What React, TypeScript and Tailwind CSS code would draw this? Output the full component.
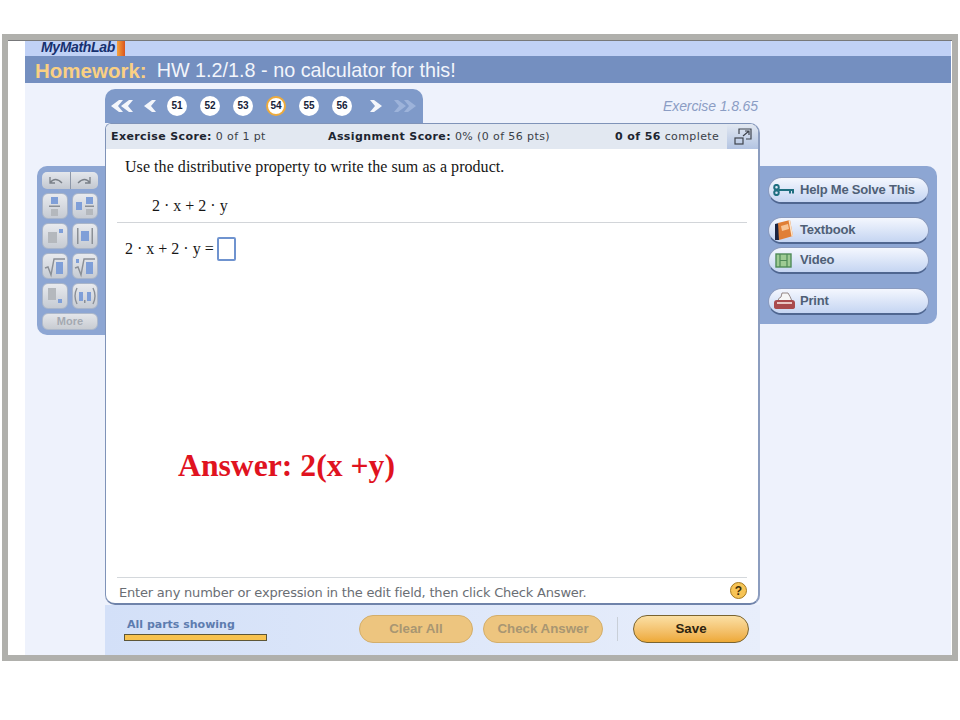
import React from 'react';

const pages = ['51', '52', '53', '54', '55', '56'];

function Chevron({ double, left, color }: { double?: boolean; left?: boolean; color: string }) {
  return (
    <svg width={double ? 24 : 14} height="14" viewBox={double ? '0 0 24 14' : '0 0 14 14'} className="shrink-0">
      <g fill={color} transform={left ? (double ? 'translate(24 0) scale(-1 1)' : 'translate(14 0) scale(-1 1)') : undefined}>
        <path d="M1 1 L5 1 L13 7 L5 13 L1 13 L6 7 Z" />
        {double && <path d="M11 1 L15 1 L23 7 L15 13 L11 13 L16 7 Z" />}
      </g>
    </svg>
  );
}

function ToolIcon({ kind }: { kind: number }) {
  const b = '#7f9fd8';
  const g = '#b4b8bd';
  const d = '#8a8f96';
  return (
    <svg width="24" height="24" viewBox="0 0 24 24">
      {kind === 0 && (
        <g>
          <rect x="8" y="3" width="7" height="7" fill={b} />
          <rect x="6" y="11.5" width="11" height="1.5" fill={d} />
          <rect x="8" y="15" width="7" height="7" fill={g} />
        </g>
      )}
      {kind === 1 && (
        <g>
          <rect x="3" y="8" width="6" height="8" fill={b} />
          <rect x="13" y="3" width="7" height="7" fill={b} />
          <rect x="12" y="11.5" width="9" height="1.5" fill={d} />
          <rect x="13" y="15" width="7" height="6" fill={g} />
        </g>
      )}
      {kind === 2 && (
        <g>
          <rect x="5" y="8" width="9" height="11" fill={g} />
          <rect x="16" y="5" width="4" height="4" fill={b} />
        </g>
      )}
      {kind === 3 && (
        <g>
          <rect x="4" y="4" width="1.5" height="16" fill={d} />
          <rect x="8" y="7" width="8" height="10" fill={b} />
          <rect x="18.5" y="4" width="1.5" height="16" fill={d} />
        </g>
      )}
      {kind === 4 && (
        <g>
          <path d="M2 14 L5 13 L8 21 L11 5 L22 5" fill="none" stroke={d} strokeWidth="1.4" />
          <rect x="13" y="8" width="7" height="12" fill={b} />
        </g>
      )}
      {kind === 5 && (
        <g>
          <rect x="3" y="5" width="3" height="4" fill={b} />
          <path d="M2 14 L5 13 L8 21 L11 5 L22 5" fill="none" stroke={d} strokeWidth="1.4" />
          <rect x="13" y="8" width="7" height="12" fill={b} />
        </g>
      )}
      {kind === 6 && (
        <g>
          <rect x="5" y="4" width="8" height="12" fill={g} />
          <rect x="15" y="15" width="4" height="4" fill={b} />
        </g>
      )}
      {kind === 7 && (
        <g>
          <path d="M4 4 Q0 12 4 20 M20 4 Q24 12 20 20" fill="none" stroke={d} strokeWidth="1.4" />
          <rect x="6" y="8" width="4" height="9" fill={b} />
          <rect x="11" y="16" width="1.5" height="3" fill={d} />
          <rect x="14" y="8" width="4" height="9" fill={b} />
        </g>
      )}
    </svg>
  );
}

function SideButton({ label, icon, className }: { label: string; icon: React.ReactNode; className?: string }) {
  return (
    <div className={`w-[161px] h-[27px] rounded-[14px] border border-[#8b9cc0] border-b-2 border-b-[#4f6690] bg-gradient-to-b from-[#f4f7fe] to-[#c5d5f2] flex items-center ${className ?? ''}`}>
      <span className="w-[31px] pl-[4px] flex items-center shrink-0">{icon}</span>
      <span className="text-[13px] leading-none pb-[2px] font-bold text-[#4f5f76] font-['Liberation_Sans',sans-serif] tracking-[-0.2px]">{label}</span>
    </div>
  );
}

export default function App() {
  return (
    <div className="w-[960px] h-[720px] bg-white pt-[34px] overflow-hidden font-['Liberation_Sans',sans-serif]">
      <div className="h-[627px] ml-[2px] mr-[2px] bg-white border-[6px] border-[#b0b0ac] flex flex-col">
        <div className="flex-1 flex flex-col pl-[17px] pr-[1px] border-t border-t-[#77787a]">
          {/* header bands */}
          <div className="h-[15px] bg-[#c0d1f6] relative flex items-center shrink-0">
            <span className="ml-[16px] pb-[3px] text-[14px] leading-none font-bold italic text-[#16306f] tracking-[-0.35px]">MyMathLab</span>
            <span className="w-[8px] h-[15px] ml-[2px] bg-gradient-to-r from-[#f5a33c] to-[#d9531e]"></span>
          </div>
          <div className="h-[27px] bg-[#748fc0] flex items-center pl-[10px] pt-[3px] shrink-0 leading-none">
            <span className="font-bold text-[20.5px] text-[#fad083]">Homework:</span>
            <span className="ml-[10px] text-[19.8px] text-[#f2f5fb]">HW 1.2/1.8 - no calculator for this!</span>
          </div>

          {/* main area */}
          <div className="flex-1 bg-[#eef2fc] flex pl-[12px] min-h-0">
            {/* left tools */}
            <div className="w-[68px] pt-[83px] shrink-0">
              <div className="h-[169px] bg-[#8da6d3] rounded-l-[10px] pl-[5px] pt-[6px]">
                <div className="w-[56px] h-[17px] rounded-[5px] bg-gradient-to-b from-[#e4e7ec] to-[#c3c8d0] flex items-center">
                  <span className="flex-1 border-r border-r-[#8d97a8] h-full flex items-center justify-center">
                    <svg width="14" height="9" viewBox="0 0 14 9"><path d="M1 1 L1 7 L6 7 M1 7 Q6 0 13 7" fill="none" stroke="#7a8088" strokeWidth="1.3" /></svg>
                  </span>
                  <span className="flex-1 flex items-center justify-center">
                    <svg width="14" height="9" viewBox="0 0 14 9"><path d="M13 1 L13 7 L8 7 M13 7 Q8 0 1 7" fill="none" stroke="#7a8088" strokeWidth="1.3" /></svg>
                  </span>
                </div>
                <div className="grid grid-cols-2 w-[56px] gap-x-[4px] gap-y-[4px] mt-[4px]">
                  {[0, 1, 2, 3, 4, 5, 6, 7].map((k) => (
                    <div key={k} className="w-[26px] h-[26px] rounded-[6px] border border-[#a9b5c9] bg-gradient-to-b from-[#e8eaee] to-[#c6cbd3] flex items-center justify-center overflow-hidden">
                      <ToolIcon kind={k} />
                    </div>
                  ))}
                </div>
                <div className="w-[56px] h-[17px] mt-[4px] rounded-[6px] border border-[#aeb9cb] bg-gradient-to-b from-[#e4e6ea] to-[#c8ccd2] flex items-center justify-center text-[11px] font-bold text-[#a4a9b1]">More</div>
              </div>
            </div>

            {/* center column */}
            <div className="w-[655px] shrink-0 flex flex-col">
              <div className="h-[34px] mt-[6px] flex items-end justify-between shrink-0">
                <div className="w-[318px] h-[34px] bg-[#7f9ac9] rounded-t-[10px] flex items-center pl-[5px] pb-[1px]">
                  <Chevron double left color="#f4f6fb" />
                  <span className="ml-[9px]"><Chevron left color="#f4f6fb" /></span>
                  <div className="flex items-center gap-[13px] ml-[10px]">
                    {pages.map((p) => (
                      <span
                        key={p}
                        className={
                          p === '54'
                            ? "w-[20px] h-[20px] rounded-full bg-white border-2 border-[#eeab3c] flex items-center justify-center text-[10px] font-bold text-[#16223a]"
                            : "w-[20px] h-[20px] rounded-full bg-white flex items-center justify-center text-[10px] font-bold text-[#16223a]"
                        }
                      >
                        {p}
                      </span>
                    ))}
                  </div>
                  <span className="ml-[17px]"><Chevron color="#f4f6fb" /></span>
                  <span className="ml-[10px]"><Chevron double color="#9db3da" /></span>
                </div>
                <span className="text-[14px] leading-none italic text-[#8b9dc4] mr-[2px] mb-[10px] tracking-[-0.1px]">Exercise 1.8.65</span>
              </div>

              {/* card */}
              <div className="h-[482px] shrink-0 bg-white rounded-[10px] rounded-tl-[6px] border border-[#7f93b8] border-b-2 border-r-2 border-b-[#6f83aa] border-r-[#8c9dbf] flex flex-col overflow-hidden">
                <div className="h-[25px] bg-[#e2e8f1] flex items-center shrink-0 pl-[5px] text-[11px] leading-none text-[#3a3f48] tracking-[0.4px] font-['DejaVu_Sans',sans-serif]">
                  <span className="w-[217px]"><b className="text-[#1d2530]">Exercise Score:</b> 0 of 1 pt</span>
                  <span className="w-[287px]"><b className="text-[#1d2530]">Assignment Score:</b> 0% (0 of 56 pts)</span>
                  <span className="w-[112px]"><b className="text-[#1d2530]">0 of 56</b> complete</span>
                  <span className="w-[31px] h-[25px] bg-gradient-to-b from-[#e2e8f1] to-[#b3c4e2] flex items-center justify-center">
                    <svg width="18" height="17" viewBox="0 0 18 17">
                      <path d="M5 6 L5 1 L17 1 L17 11 L12 11" fill="none" stroke="#3f444d" strokeWidth="1.2" />
                      <rect x="1" y="10" width="8" height="6" fill="none" stroke="#3f444d" strokeWidth="1.2" />
                      <path d="M9 8 L15 3 M11 3 L15 3 L15 7" fill="none" stroke="#3f444d" strokeWidth="1.2" />
                    </svg>
                  </span>
                </div>

                <div className="flex-1 flex flex-col pl-[11px] pr-[11px] font-['Liberation_Serif',serif] text-[#161616] min-h-0">
                  <p className="text-[16px] tracking-[0.05px] leading-none mt-[10px] ml-[8px]">Use the distributive property to write the sum as a product.</p>
                  <p className="text-[16px] leading-none mt-[23px] ml-[35px] whitespace-pre">2 · x + 2 · y</p>
                  <div className="h-px bg-[#d2d5d9] mt-[8px]"></div>
                  <div className="flex items-center mt-[14px] ml-[8px] text-[16px] leading-none">
                    <span className="whitespace-pre">2 · x + 2 · y =</span>
                    <span className="w-[19px] h-[24px] ml-[3px] border-2 border-[#6f93cf] rounded-[2px]"></span>
                  </div>
                  <p className="text-[31.7px] leading-none font-bold text-[#e0131f] mt-[189px] ml-[61px] whitespace-pre">Answer: 2(x +y)</p>
                  <div className="mt-auto h-[26px] border-t border-t-[#d4d8dc] flex items-center justify-between shrink-0 pl-[2px]">
                    <span className="text-[13px] leading-none pt-[3px] text-[#6a6e74] font-['DejaVu_Sans',sans-serif] tracking-[-0.2px]">Enter any number or expression in the edit field, then click Check Answer.</span>
                    <span className="w-[17px] h-[17px] rounded-full bg-[#f7c455] border border-[#a57a20] flex items-center justify-center text-[12px] font-bold text-[#3b2b08] font-['Liberation_Sans',sans-serif]">?</span>
                  </div>
                </div>
              </div>

              {/* bottom strip */}
              <div className="flex-1 bg-gradient-to-r from-[#d3e0f8] to-[#e8eefb] flex items-start min-h-0">
                <div className="w-[254px] pt-[14px] pl-[19px] shrink-0">
                  <div className="text-[11px] leading-none font-bold text-[#5d7caf] font-['DejaVu_Sans',sans-serif] ml-[3px]">All parts showing</div>
                  <div className="w-[143px] h-[7px] mt-[4px] bg-[#f7c24f] border border-[#5d5637]"></div>
                </div>
                <div className="flex items-center mt-[10px] text-[13.3px]">
                  <div className="w-[114px] h-[28px] rounded-[14px] bg-[#edc57f] border border-[#d3ae6b] flex items-center justify-center font-bold text-[#a89672]">Clear All</div>
                  <div className="w-[120px] h-[28px] ml-[10px] rounded-[14px] bg-[#edc57f] border border-[#d3ae6b] flex items-center justify-center font-bold text-[#a89672]">Check Answer</div>
                  <div className="w-px h-[24px] ml-[14px] bg-[#c9cfd8]"></div>
                  <div className="w-[116px] h-[28px] ml-[15px] rounded-[14px] bg-gradient-to-b from-[#fbe0a4] to-[#eda935] border border-[#7a6430] flex items-center justify-center font-bold text-[#2e2410]">Save</div>
                </div>
              </div>
            </div>

            {/* right tools */}
            <div className="pt-[83px] shrink-0">
              <div className="w-[177px] h-[158px] bg-[#8da6d3] rounded-r-[10px] pl-[8px] pt-[11px]">
                <SideButton
                  label="Help Me Solve This"
                  icon={
                    <svg width="22" height="12" viewBox="0 0 22 12">
                      <g fill="none" stroke="#1f6f80" strokeWidth="2">
                        <circle cx="3.5" cy="3.2" r="2.3" />
                        <circle cx="3.5" cy="8.8" r="2.3" />
                        <path d="M6 6 L21 6 M17 6 L17 9.5 M20 6 L20 9.5" />
                      </g>
                    </svg>
                  }
                />
                <SideButton
                  className="mt-[13px]"
                  label="Textbook"
                  icon={
                    <svg width="21" height="21" viewBox="0 0 21 21" className="overflow-visible">
                      <path d="M2 4 L6 3 L6 20 L2 20 Z" fill="#1c2440" />
                      <path d="M5 3 L17 0 L20 16 L6 20 Z" fill="#e07f36" />
                      <path d="M17 0 L20 16 L18.5 16.5 L15.5 0.5 Z" fill="#fbe3c8" />
                      <path d="M8 6 L15 4 L16 9 L9 11 Z" fill="#f7c596" />
                    </svg>
                  }
                />
                <SideButton
                  className="mt-[3px]"
                  label="Video"
                  icon={
                    <svg width="18" height="15" viewBox="0 0 18 15" className="ml-[2px]">
                      <rect x="1" y="1" width="15" height="13" fill="#9ecb94" stroke="#4f8a58" strokeWidth="1.4" />
                      <path d="M5 1 L5 14 M12 1 L12 14 M5 7.5 L12 7.5" stroke="#4f8a58" strokeWidth="1.2" />
                    </svg>
                  }
                />
                <SideButton
                  className="mt-[14px]"
                  label="Print"
                  icon={
                    <svg width="23" height="18" viewBox="0 0 23 18">
                      <path d="M5 9 Q5 6 8 5 L9 1 L15 1 Q17 4 19 9 Z" fill="#f6f6f6" stroke="#8a7a78" strokeWidth="0.9" />
                      <path d="M1 11 Q1 8 4 8 L19 8 Q22 8 22 11 L22 15 Q22 17 19 17 L4 17 Q1 17 1 15 Z" fill="#a9494c" />
                      <rect x="4" y="10" width="15" height="2" fill="#e9c6c4" />
                    </svg>
                  }
                />
              </div>
            </div>
          </div>
        </div>
      </div>
    </div>
  );
}
